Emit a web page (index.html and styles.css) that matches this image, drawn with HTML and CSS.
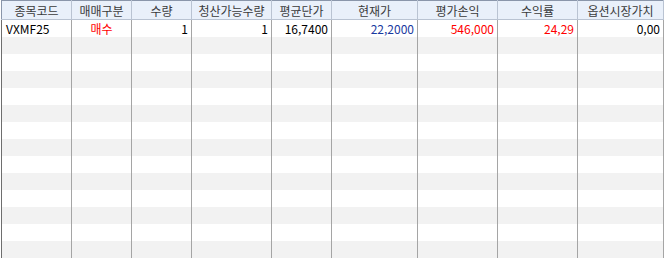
FILE: index.html
```html
<!DOCTYPE html>
<html lang="ko">
<head>
<meta charset="utf-8">
<link rel="stylesheet" href="styles.css">
</head>
<body>
<div class="wrap">
<table class="grid">
  <colgroup>
    <col class="c1"><col class="c2"><col class="c3"><col class="c4"><col class="c5"><col class="c6"><col class="c7"><col class="c8"><col class="c9">
  </colgroup>
  <thead>
    <tr>
      <th>종목코드</th><th>매매구분</th><th>수량</th><th>청산가능수량</th><th>평균단가</th><th>현재가</th><th>평가손익</th><th>수익률</th><th>옵션시장가치</th>
    </tr>
  </thead>
  <tbody>
    <tr>
      <td class="l">VXMF25</td><td class="c red">매수</td><td class="r">1</td><td class="r">1</td><td class="r">16,7400</td><td class="r blue">22,2000</td><td class="r red">546,000</td><td class="r red">24,29</td><td class="r">0,00</td>
    </tr>
    <tr><td></td><td></td><td></td><td></td><td></td><td></td><td></td><td></td><td></td></tr>
    <tr><td></td><td></td><td></td><td></td><td></td><td></td><td></td><td></td><td></td></tr>
    <tr><td></td><td></td><td></td><td></td><td></td><td></td><td></td><td></td><td></td></tr>
    <tr><td></td><td></td><td></td><td></td><td></td><td></td><td></td><td></td><td></td></tr>
    <tr><td></td><td></td><td></td><td></td><td></td><td></td><td></td><td></td><td></td></tr>
    <tr><td></td><td></td><td></td><td></td><td></td><td></td><td></td><td></td><td></td></tr>
    <tr><td></td><td></td><td></td><td></td><td></td><td></td><td></td><td></td><td></td></tr>
    <tr><td></td><td></td><td></td><td></td><td></td><td></td><td></td><td></td><td></td></tr>
    <tr><td></td><td></td><td></td><td></td><td></td><td></td><td></td><td></td><td></td></tr>
    <tr><td></td><td></td><td></td><td></td><td></td><td></td><td></td><td></td><td></td></tr>
    <tr><td></td><td></td><td></td><td></td><td></td><td></td><td></td><td></td><td></td></tr>
    <tr><td></td><td></td><td></td><td></td><td></td><td></td><td></td><td></td><td></td></tr>
    <tr><td></td><td></td><td></td><td></td><td></td><td></td><td></td><td></td><td></td></tr>
    <tr><td></td><td></td><td></td><td></td><td></td><td></td><td></td><td></td><td></td></tr>
  </tbody>
</table>
</div>
</body>
</html>
```

FILE: styles.css
```css
html, body {
  margin: 0;
  padding: 0;
  background: #ffffff;
}
.wrap {
  width: 664px;
  height: 258px;
  overflow: hidden;
  padding-left: 1px;
  box-sizing: border-box;
}
.grid {
  border-collapse: collapse;
  table-layout: fixed;
  width: 662px;
  font-family: "Noto Sans CJK KR", "Liberation Sans", sans-serif;
  font-size: 12px;
  color: #000;
}
.c1 { width: 70px; }
.c2 { width: 60px; }
.c3 { width: 60px; }
.c4 { width: 80px; }
.c5 { width: 60px; }
.c6 { width: 86px; }
.c7 { width: 80px; }
.c8 { width: 80px; }
.c9 { width: 86px; }
.grid th {
  height: 18px;
  padding: 0;
  background: #e9f0fa;
  color: #3a3a3a;
  font-weight: normal;
  text-align: center;
  border-top: 1px solid #8a96aa;
  border-bottom: 1px solid #b9c3d2;
  border-right: 1px solid #b9c3d2;
  line-height: 17px;
  white-space: nowrap;
  overflow: hidden;
}
.grid th:first-child {
  border-left: 1px solid #8a96aa;
}
.grid td {
  height: 17px;
  padding: 0 4px;
  border-right: 1px solid #a5a5a5;
  line-height: 17px;
  white-space: nowrap;
  overflow: hidden;
}
.grid td:first-child {
  border-left: 1px solid #6e6e6e;
}
.grid tbody tr:nth-child(even) td {
  background: #f2f2f2;
}
.grid td.l { text-align: left; padding-left: 4px; }
.grid td.c { text-align: center; }
.grid td.r { text-align: right; padding-right: 3px; }
.red { color: #ff0000; }
.blue { color: #1a3aa0; }
```
